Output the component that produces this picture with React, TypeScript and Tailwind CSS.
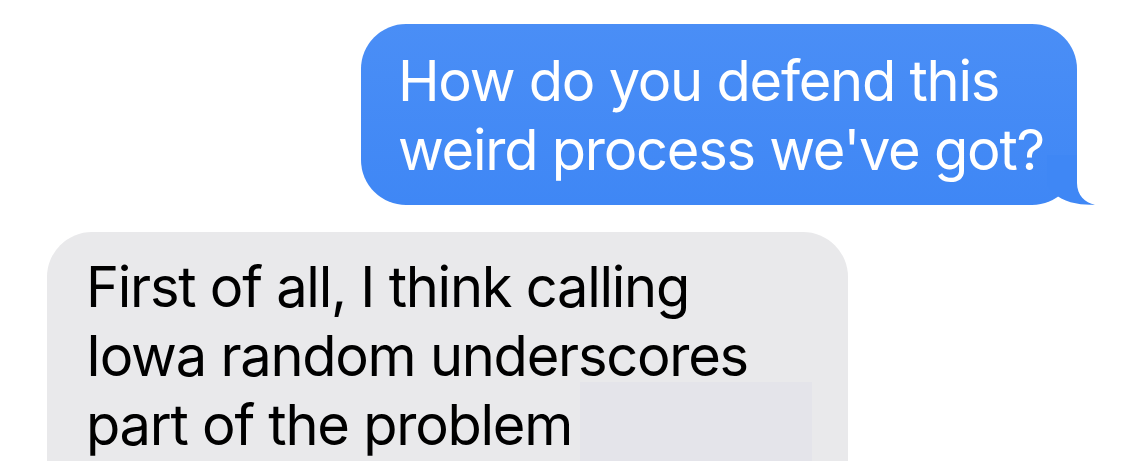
import React from "react";

export default function App() {
  const font = { fontFamily: "Inter, 'Noto Sans', sans-serif" };
  return (
    <div className="w-[1125px] h-[461px] overflow-hidden bg-white relative" style={font}>
      <div className="flex flex-col pt-[24px]">
        <div className="flex justify-end pr-[48px]">
          <div className="relative w-[716px] h-[181px] rounded-[45px] bg-gradient-to-b from-[#4a8ef6] to-[#3f87f5] pl-[37px] pt-[23px] text-white text-[56px] leading-[69px] tracking-[-1.25px]">
            <div className="relative z-10">How do you defend this</div>
            <div className="relative z-10">weird process we've got?</div>
            <svg className="absolute right-[-20px] bottom-0" width="50" height="50" viewBox="0 0 50 50">
              <path d="M30 0 L30 28 C30 40 38 48 48 49.6 C36 50.5 16 48 7 38 L0 30 L0 0 Z" fill="#3f87f5" />
            </svg>
          </div>
        </div>
        <div className="flex pl-[47px] mt-[27px]">
          <div className="relative w-[801px] h-[300px] rounded-[45px] bg-[#e9e9eb] pl-[39px] pt-[21px] text-black text-[56px] leading-[69px] tracking-[-1.25px]">
            <div className="absolute left-[533px] top-[150px] w-[232px] h-[120px] bg-[#e4e4ea]" />
            <div className="relative">First of all, I think calling</div>
            <div className="relative">Iowa random underscores</div>
            <div className="relative">part of the problem</div>
          </div>
        </div>
      </div>
    </div>
  );
}
